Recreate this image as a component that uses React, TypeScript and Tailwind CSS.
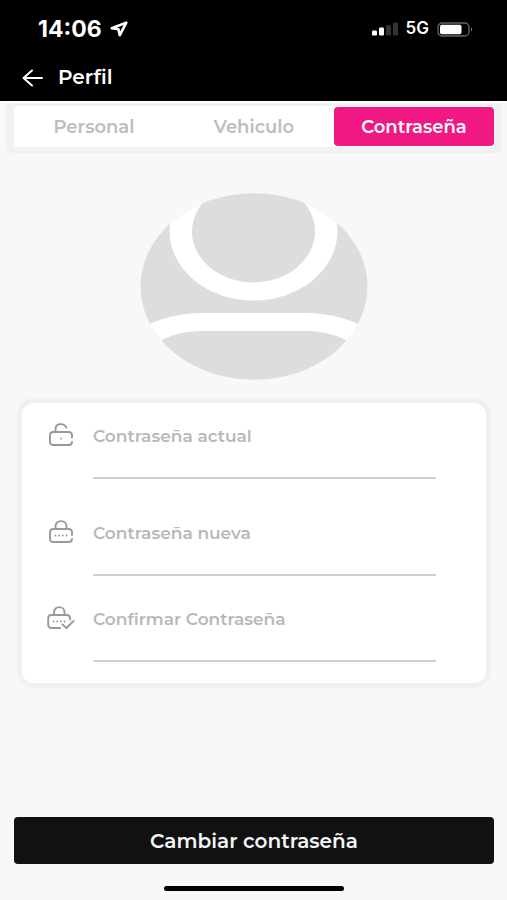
import type { ReactNode } from "react";

function StatusBar() {
  return (
    <div className="flex h-[58px] items-center justify-between pr-[34px] pl-[38px] font-['Inter',sans-serif]">
      <div className="flex items-center gap-2">
        <span className="text-[23px] font-bold">14:06</span>
        <svg width="18" height="16" viewBox="0 0 18 16" fill="none" stroke="currentColor" strokeWidth="2.6" strokeLinejoin="round" aria-hidden="true">
          <path d="M16.3 1.6 1.8 7.2 8.4 8.2 9.8 14.2Z" />
        </svg>
      </div>
      <div className="flex items-center gap-2">
        <svg width="26" height="14" viewBox="0 0 26 14" fill="currentColor" aria-hidden="true">
          <rect x="0" y="8.5" width="5" height="5" rx="1.2" />
          <rect x="7" y="5.5" width="5" height="8" rx="1.2" />
          <rect x="14" y="3" width="5" height="10.5" rx="1.2" fill="#333" />
          <rect x="21" y="0.5" width="5" height="13" rx="1.2" fill="#333" />
        </svg>
        <span className="text-[17px] font-semibold">5G</span>
        <svg width="36" height="15" viewBox="0 0 36 15" fill="none" aria-hidden="true">
          <rect x="1" y="1" width="31" height="13" rx="4.2" stroke="#666" strokeWidth="1.3" />
          <rect x="3" y="2.8" width="21.5" height="9.4" rx="2" fill="#fff" />
          <path d="M34 5.600c1.600.6 1.600 3.200 0 3.800z" fill="#777" />
        </svg>
      </div>
    </div>
  );
}

function Avatar() {
  return (
    <svg width="228" height="187" viewBox="0 0 228 187" role="img" aria-label="Foto de perfil">
      <defs>
        <clipPath id="avatar-oval">
          <ellipse cx="114" cy="93.5" rx="113.5" ry="93.3" />
        </clipPath>
      </defs>
      <g clipPath="url(#avatar-oval)">
        <rect width="228" height="187" fill="#ddd" />
        <ellipse cx="113.5" cy="38" rx="84" ry="69.5" fill="#fff" />
        <ellipse cx="113.5" cy="38.5" rx="61.5" ry="51" fill="#ddd" />
        <path d="M0 135 10.500 130.500Q32 121 59 120H169Q196 121 217.500 130.500L228 135V158L206 147Q189 138.500 169 138H59Q39 138.500 21 147L0 158Z" fill="#fff" />
      </g>
    </svg>
  );
}

function LockIcon({ children }: { children: ReactNode }) {
  return (
    <svg width="28" height="24" viewBox="0 0 28 24" fill="none" stroke="#999" strokeWidth="1.9" strokeLinecap="round" strokeLinejoin="round" aria-hidden="true">
      {children}
    </svg>
  );
}

const openLock = (
  <LockIcon>
    <path d="M8.500 9V6.500c0-6.700 8.500-6.900 10.800-1.800" />
    <path d="M25 12.500c0-2.300-.8-3.500-3.500-3.500H6.500C3.800 9 3 10.200 3 12.500v6C3 20.800 3.800 22 6.500 22h15c2.700 0 3.500-1 3.500-3" />
    <path d="M25 12.500v2M14 15.500h.01" />
  </LockIcon>
);

const dottedLock = (
  <LockIcon>
    <path d="M8.500 9V6.500c0-7.200 11-7.200 11 0V9" />
    <path d="M25 15v-2.500c0-2.300-.8-3.500-3.500-3.500H6.500C3.800 9 3 10.200 3 12.500v6C3 20.800 3.800 22 6.500 22h15c2.700 0 3.500-1 3.500-3" />
    <path d="M8.500 15.500h.01M12.200 15.500h.01M15.900 15.500h.01M19.600 15.500h.01" />
  </LockIcon>
);

const checkedLock = (
  <LockIcon>
    <path d="M7 9V6.500c0-7.200 10.500-7.200 10.500 0V9" />
    <path d="M23.200 13.500c0-3-.8-4.500-3.500-4.500H4.700C2 9 1.200 10.200 1.200 12.500v6C1.200 20.800 2 22 4.700 22h8.500" />
    <path d="m15.500 18.500 4 3.500 7-7" />
    <path d="M6.500 15.500h.01M10.200 15.500h.01M13.900 15.500h.01M17.600 15.500h.01" />
  </LockIcon>
);

function PasswordField({ id, label, icon }: { id: string; label: string; icon: ReactNode }) {
  return (
    <div className="flex gap-[18px]">
      {icon}
      <div className="flex flex-1 flex-col">
        <label htmlFor={id} className="text-[17px] leading-[26px] font-semibold text-[#b8b8b8]">
          {label}
        </label>
        <input id={id} type="password" className="h-[30px] w-full border-b-2 border-[#d0d0d0] bg-transparent outline-none" />
      </div>
    </div>
  );
}

export default function App() {
  return (
    <div className="flex min-h-screen flex-col bg-[#f8f8f8] font-['Montserrat','Inter',sans-serif]">
      <header className="bg-black text-white">
        <StatusBar />
        <div className="flex h-[43px] items-start gap-[15px] pl-[22px]">
          <button type="button" aria-label="Volver" className="flex h-10 items-center">
            <svg width="21" height="18" viewBox="0 0 21 18" fill="none" stroke="currentColor" strokeWidth="2" strokeLinecap="round" strokeLinejoin="round">
              <path d="M20 9H1.500M10 1.500 1.500 9 10 16.500" />
            </svg>
          </button>
          <h1 className="text-xl leading-[38px] font-semibold">Perfil</h1>
        </div>
      </header>

      <main className="flex flex-1 flex-col">
        <div className="h-0.5 bg-white" />
        <nav className="mr-[5px] ml-1.5 rounded-b-md bg-[#f1f1f1] px-2 pt-[3px] pb-1.5">
          <div className="flex h-[41px] rounded-sm bg-white text-lg font-semibold">
            <button type="button" className="flex-1 text-[#bdbdbd]">Personal</button>
            <button type="button" className="flex-1 text-[#bdbdbd]">Vehiculo</button>
            <button type="button" aria-current="page" className="my-px flex-1 rounded bg-[#f01882] text-white">Contraseña</button>
          </div>
        </nav>

        <div className="mt-10 flex justify-center">
          <Avatar />
        </div>

        <form id="password-form" className="mt-[23px] mr-[21px] ml-[22px] flex flex-col rounded-xl bg-white pt-5 pr-[50px] pb-[21px] pl-[25px] shadow-[0_0_2px_5px_#f0f0f0]">
          <PasswordField id="actual" label="Contraseña actual" icon={openLock} />
          <div className="mt-[41px]">
            <PasswordField id="nueva" label="Contraseña nueva" icon={dottedLock} />
          </div>
          <div className="mt-[30px]">
            <PasswordField id="confirmar" label="Confirmar Contraseña" icon={checkedLock} />
          </div>
        </form>

        <div className="mt-auto flex flex-col items-center pt-8 pr-[13px] pb-[9px] pl-3.5">
          <button type="submit" form="password-form" className="h-[47px] w-full rounded bg-[#111] text-xl font-semibold text-[#f5f5f5]">
            Cambiar contraseña
          </button>
          <div className="mt-[22px] h-[5px] w-[180px] rounded-full bg-black" />
        </div>
      </main>
    </div>
  );
}
